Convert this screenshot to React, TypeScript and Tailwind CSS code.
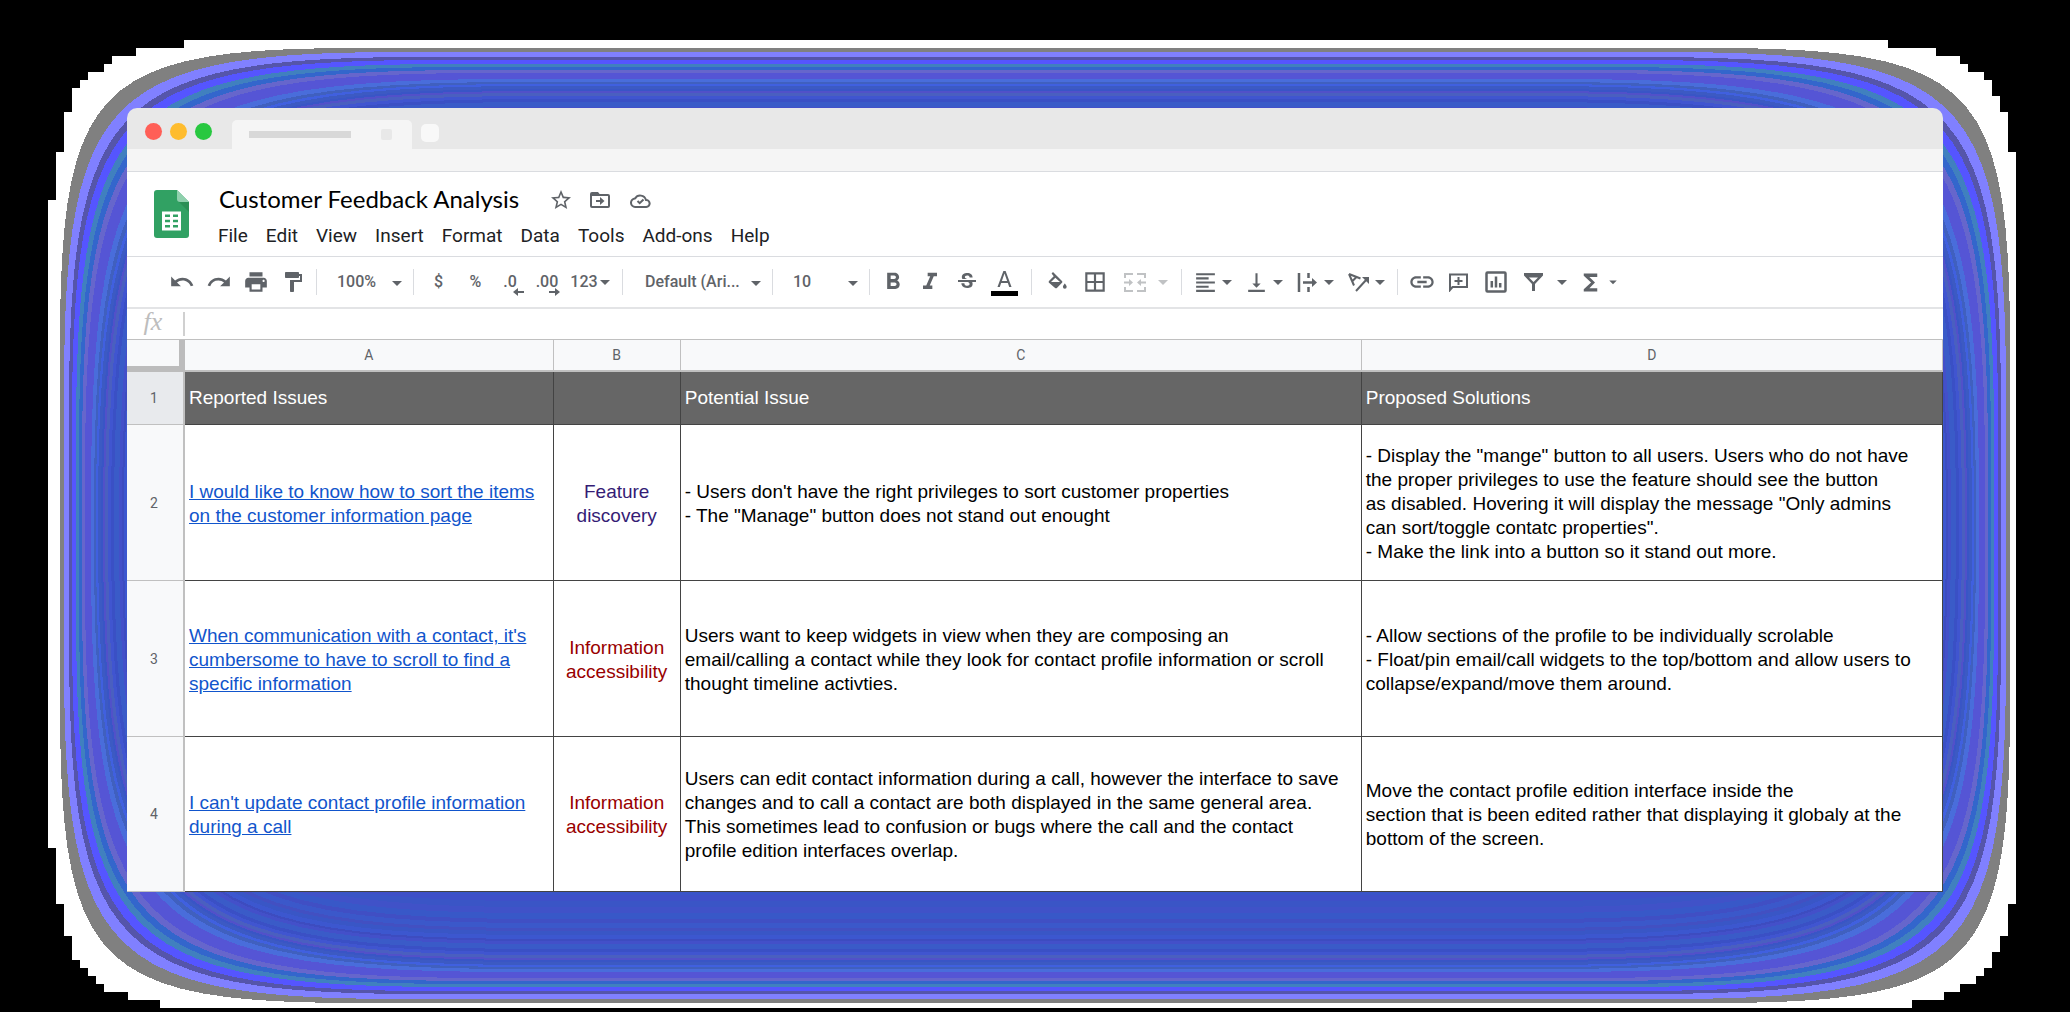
import type { ReactNode } from "react";
import {
  MdUndo,
  MdRedo,
  MdPrint,
  MdFormatPaint,
  MdFormatBold,
  MdFormatItalic,
  MdStrikethroughS,
  MdBorderAll,
  MdFormatAlignLeft,
  MdVerticalAlignBottom,
  MdInsertLink,
  MdFunctions,
  MdStarBorder,
} from "react-icons/md";

const BANDS: [number, string][] = [
  [0, "#808080"],
  [4, "#8080ff"],
  [9, "#5555aa"],
  [12, "#5555ff"],
  [16, "#4080bf"],
  [19, "#3366cc"],
  [22, "#6666cc"],
  [25, "#5555d5"],
  [31, "#496ddb"],
  [34, "#4060bf"],
  [36, "#4060df"],
  [38, "#3c5ac3"],
  [41, "#3955c6"],
  [43, "#5151c9"],
  [45, "#4a5fc0"],
  [48, "#4055d0"],
  [51, "#3a50c5"],
  [54, "#3a5bc8"],
  [59, "#4350c9"],
  [62, "#3d4cc0"],
  [64, "#3c57cf"],
  [68, "#3956c6"],
  [72, "#4250c2"],
  [75, "#3b58ca"],
  [80, "#404fc4"],
  [84, "#3858c8"],
  [90, "#4052c8"],
  [96, "#3a55c6"],
  [102, "#3e50c8"],
  [108, "#3954c8"],
];

function bandPath(d: number) {
  const l = 60 + d;
  const t = 48 + d;
  const r = 2010 - d;
  const b = 1003 - d;
  const c = Math.min(d === 0 ? 300 : 330 + d * 3, (b - t) / 2);
  const k = c * 0.12;
  return `M${l} ${t + c}C${l} ${t + k} ${l + k} ${t} ${l + c} ${t}H${r - c}C${r - k} ${t} ${r} ${t + k} ${r} ${t + c}V${b - c}C${r} ${b - k} ${r - k} ${b} ${r - c} ${b}H${l + c}C${l + k} ${b} ${l} ${b - k} ${l} ${b - c}Z`;
}

function Glow() {
  return (
    <svg
      className="absolute inset-0 h-full w-full"
      viewBox="0 0 2070 1012"
      preserveAspectRatio="none"
      shapeRendering="crispEdges"
      aria-hidden="true"
    >
      <path
        fill="#fff"
        d="M184 40H1888V48H1936V56H1960V64H1968V72H1984V80H1992V96H2000V112H2008V152H2016V904H2008V936H2000V952H1992V968H1984V976H1976V984H1960V992H1944V1000H1912V1008H160V1000H128V992H104V984H96V976H88V968H80V960H72V936H64V904H56V848H48V200H56V152H64V112H72V88H80V80H88V72H104V64H112V56H136V48H184Z"
      />
      {BANDS.map(([d, color]) => (
        <path key={d} d={bandPath(d)} fill={color} />
      ))}
    </svg>
  );
}

function Caret({ className = "" }: { className?: string }) {
  return (
    <svg className={`h-[14px] w-[14px] shrink-0 ${className}`} viewBox="0 0 14 14" fill="currentColor" aria-hidden="true">
      <path d="M2 5h10L7 10z" />
    </svg>
  );
}

function Tool({ label, children, className = "w-[37px]" }: { label: string; children: ReactNode; className?: string }) {
  return (
    <button
      type="button"
      aria-label={label}
      className={`flex h-9 shrink-0 items-center justify-center ${className}`}
    >
      {children}
    </button>
  );
}

function MenuTool({ label, children }: { label: string; children: ReactNode }) {
  return (
    <Tool label={label} className="w-[51px] gap-[2px]">
      {children}
      <Caret />
    </Tool>
  );
}

function Divider({ className = "" }: { className?: string }) {
  return <div className={`h-[26px] w-px shrink-0 bg-[#dadce0] ${className}`} />;
}

function Picker({ label, value, options, className, pad }: { label: string; value: string; options: string[]; className: string; pad: string }) {
  return (
    <div className={`relative shrink-0 ${className}`}>
      <select
        aria-label={label}
        defaultValue={value}
        className={`h-9 w-full appearance-none bg-transparent font-medium ${pad}`}
      >
        {options.map((o) => (
          <option key={o}>{o}</option>
        ))}
      </select>
      <Caret className="pointer-events-none absolute right-[9px] top-[12px]" />
    </div>
  );
}

function Decimal({ text, right }: { text: string; right?: boolean }) {
  return (
    <span className="relative -ml-[5px]">
      {text}
      <svg className={`absolute top-[18px] h-[8px] w-[11px] ${right ? "-right-[2px]" : "-right-[7px]"}`} viewBox="0 0 11 8" fill="currentColor" aria-hidden="true">
        {right ? <path d="M0 3h6V0l5 4-5 4V5H0z" /> : <path d="M11 3H5V0L0 4l5 4V5h6z" />}
      </svg>
    </span>
  );
}

function Toolbar() {
  return (
    <div className="flex h-[52px] items-center overflow-hidden border-b-2 border-[#e3e4e6] pl-9 text-base font-medium text-[#5f6368]" role="toolbar">
      <Tool label="Undo"><MdUndo size={26} /></Tool>
      <Tool label="Redo"><MdRedo size={26} /></Tool>
      <Tool label="Print"><MdPrint size={26} /></Tool>
      <Tool label="Paint format"><MdFormatPaint size={24} /></Tool>
      <Divider className="ml-[5px]" />
      <Picker label="Zoom" value="100%" options={["50%", "100%", "150%"]} className="w-[96px]" pad="pl-5" />
      <Divider />
      <Tool label="Format as currency" className="ml-[6px] w-[37px]">$</Tool>
      <Tool label="Format as percent">%</Tool>
      <Tool label="Decrease decimal places"><Decimal text=".0" /></Tool>
      <Tool label="Increase decimal places"><Decimal text=".00" right /></Tool>
      <Tool label="More formats" className="w-[46px]">
        123
        <Caret />
      </Tool>
      <Divider className="ml-[8px]" />
      <Picker label="Font" value="Default (Ari..." options={["Default (Ari...", "Roboto", "Verdana"]} className="w-[149px]" pad="pl-[22px]" />
      <Divider />
      <Picker label="Font size" value="10" options={["8", "10", "12"]} className="w-[96px]" pad="pl-5" />
      <Divider className="mr-[4px]" />
      <Tool label="Bold"><MdFormatBold size={28} /></Tool>
      <Tool label="Italic"><MdFormatItalic size={28} /></Tool>
      <Tool label="Strikethrough"><MdStrikethroughS size={24} /></Tool>
      <Tool label="Text color" className="ml-px w-[37px]">
        <span className="flex flex-col items-center gap-[4px] pt-[2px]">
          <svg className="h-[16px] w-[15px]" viewBox="0 0 16 17" fill="currentColor" aria-hidden="true">
            <path d="M6.800 0h2.400L15.500 17h-2.500l-1.400-4.200H4.400L3 17H.5zM8 2.700 5.200 10.700h5.600z" />
          </svg>
          <span className="h-[5px] w-[27px] bg-black" />
        </span>
      </Tool>
      <Divider className="ml-[8px] mr-[6px]" />
      <Tool label="Fill color">
        <svg className="h-[20px] w-[20px]" viewBox="0 0 20 20" fill="currentColor" aria-hidden="true">
          <path
            fillRule="evenodd"
            d="M4.600 1.400 6 0l9 9a1.300 1.300 0 0 1 0 1.800l-5.100 5.100a1.300 1.300 0 0 1-1.800 0L2 10.800A1.300 1.300 0 0 1 2 9l4.700-4.700zM8.300 5.700 4 10h9z"
          />
          <path d="M17.800 11.500s1.900 2.100 1.900 3.300a1.900 1.900 0 0 1-3.800 0c0-1.200 1.900-3.300 1.900-3.300z" />
        </svg>
      </Tool>
      <Tool label="Borders" className="ml-px w-[37px]"><MdBorderAll size={26} /></Tool>
      <Tool label="Merge cells" className="ml-[3px] w-[37px] text-[#c0c2c4]">
        <svg className="h-[19px] w-[22px]" viewBox="0 0 22 19" fill="none" stroke="currentColor" strokeWidth="2" aria-hidden="true">
          <path d="M1 5V1h8M13 1h8v4M1 14v4h8M13 18h8v-4M0 9.500h6M22 9.500h-6" />
          <path d="M5 6l4 3.500L5 13zM17 6l-4 3.500 4 3.500z" fill="currentColor" stroke="none" />
        </svg>
      </Tool>
      <Tool label="Merge type" className="w-5 text-[#c0c2c4]"><Caret /></Tool>
      <Divider className="ml-[8px] mr-[6px]" />
      <MenuTool label="Horizontal align"><MdFormatAlignLeft size={25} /></MenuTool>
      <MenuTool label="Vertical align"><MdVerticalAlignBottom size={25} /></MenuTool>
      <MenuTool label="Text wrapping">
        <svg className="h-[25px] w-[25px]" viewBox="0 0 25 25" fill="none" stroke="currentColor" strokeWidth="2.500" aria-hidden="true">
          <path d="M4 3v19M13.500 3v5M13.500 17v5M8 12.500h11" />
          <path d="M17 8l5 4.500-5 4.500z" fill="currentColor" stroke="none" />
        </svg>
      </MenuTool>
      <MenuTool label="Text rotation">
        <svg className="h-[25px] w-[25px]" viewBox="0 0 25 25" fill="none" stroke="currentColor" strokeWidth="2" aria-hidden="true">
          <path d="M3 4l11.500 4.500M3 4l5 11.500M6 11.500l5-5M10 21l11-12" />
          <path d="M16 7h7v7z" fill="currentColor" stroke="none" />
        </svg>
      </MenuTool>
      <Divider className="mx-[5px]" />
      <Tool label="Insert link"><MdInsertLink size={28} /></Tool>
      <Tool label="Insert comment">
        <svg className="h-[19px] w-[19px]" viewBox="0 0 19 19" fill="none" stroke="currentColor" strokeWidth="2" aria-hidden="true">
          <path d="M1 17V1.500h17v12.500H3.500zM9.500 4v8M5.500 8h8" />
        </svg>
      </Tool>
      <Tool label="Insert chart">
        <svg className="h-[22px] w-[22px]" viewBox="0 0 22 22" fill="none" stroke="currentColor" strokeWidth="2.500" aria-hidden="true">
          <rect x="1.500" y="1.500" width="19" height="19" rx="1" />
          <path d="M6.800 10v6.500M11 5.500v11M15.200 12v4.500" />
        </svg>
      </Tool>
      <Tool label="Create a filter" className="ml-px w-[37px]">
        <svg className="h-[18px] w-[19px]" viewBox="0 0 19 18" fill="currentColor" aria-hidden="true">
          <path fillRule="evenodd" d="M0 0h19v2.500L11 11v7H8v-7L0 2.500zM5 4.500l4.500 4.500L14 4.500z" />
        </svg>
      </Tool>
      <Tool label="Filter views" className="w-5"><Caret /></Tool>
      <Tool label="Functions"><MdFunctions size={27} /></Tool>
      <Tool label="More functions" className="-ml-1 w-4"><Caret className="scale-75" /></Tool>
    </div>
  );
}

function TitleBar() {
  return (
    <div className="flex h-[41px] items-end overflow-hidden rounded-t-[10px] bg-[#e8e8e8] pl-[18px]">
      <div className="flex gap-[8px] pb-[9px]">
        <span className="h-[17px] w-[17px] rounded-full bg-[#ff5f57]" />
        <span className="h-[17px] w-[17px] rounded-full bg-[#febc2e]" />
        <span className="h-[17px] w-[17px] rounded-full bg-[#28c840]" />
      </div>
      <div className="ml-[20px] flex h-[29px] w-[180px] items-center justify-between rounded-t-[5px] bg-[#f5f5f5] pl-[17px] pr-[20px]">
        <span className="h-[7px] w-[102px] bg-[#d8d8d8]" />
        <span className="h-[11px] w-[11px] rounded-[2px] bg-[#e8e8e8]" />
      </div>
      <span className="mb-[7px] ml-[9px] h-[18px] w-[18px] rounded-[5px] bg-[#f8f8f8]" />
    </div>
  );
}

function SheetsLogo() {
  return (
    <svg className="h-[48px] w-[35px] shrink-0" viewBox="0 0 35 48" aria-hidden="true">
      <path fill="#31a163" d="M3 0h20l12 12v33a3 3 0 0 1-3 3H3a3 3 0 0 1-3-3V3a3 3 0 0 1 3-3z" />
      <path fill="#2a8f55" d="M24 11l11 11V12z" />
      <path fill="#8fd0ad" d="M23 0l12 12H26a3 3 0 0 1-3-3z" />
      <path
        fill="#fff"
        fillRule="evenodd"
        d="M8 21.500h19v19H8zM11 24.500v2.500h5v-2.500zM19 24.500v2.500h5v-2.500zM11 29.700v2.600h5v-2.600zM19 29.700v2.600h5v-2.600zM11 35v2.500h5V35zM19 35v2.500h5V35z"
      />
    </svg>
  );
}

const MENUS = ["File", "Edit", "View", "Insert", "Format", "Data", "Tools", "Add-ons", "Help"];

function Header() {
  return (
    <header className="flex h-[85px] border-b border-[#dadce0] pl-[27px] pt-[18px]">
      <SheetsLogo />
      <div className="-mt-[6px] ml-[29px]">
        <div className="flex h-[32px] items-center text-[#5f6368]">
          <h1 className="pb-[2px] pl-px font-['Lato','Open_Sans',sans-serif] text-[24px] leading-[30px] text-black">Customer Feedback Analysis</h1>
          <button type="button" aria-label="Star" className="ml-[30px]"><MdStarBorder size={24} /></button>
          <button type="button" aria-label="Move" className="ml-[17px]">
            <svg className="h-[16px] w-[20px]" viewBox="0 0 20 16" fill="none" stroke="currentColor" strokeWidth="2" aria-hidden="true">
              <path d="M1 3v11a1 1 0 0 0 1 1h16a1 1 0 0 0 1-1V4a1 1 0 0 0-1-1zM6 9h5" />
              <path d="M2 0h6l2 2.500v1H0V2a2 2 0 0 1 2-2zM10 5l4.500 4L10 13z" fill="currentColor" stroke="none" />
            </svg>
          </button>
          <button type="button" aria-label="Document status" className="ml-[20px]">
            <svg className="h-[15px] w-[21px]" viewBox="0 0 21 15" fill="none" stroke="currentColor" strokeWidth="2" aria-hidden="true">
              <path d="M5.500 14a4.300 4.300 0 0 1-.4-8.600A6 6 0 0 1 16 7a3.500 3.500 0 0 1 .3 7zM7.500 8l2.200 2.200L13.500 6.500" />
            </svg>
          </button>
        </div>
        <nav className="mt-[8px] flex gap-[18px] text-[19px] leading-6 text-[#202124]">
          {MENUS.map((m) => (
            <button type="button" key={m}>{m}</button>
          ))}
        </nav>
      </div>
    </header>
  );
}

type Row = { issue: string; tag: string; tone: string; cause: string; fix: string };

const ROWS: Row[] = [
  {
    issue: "I would like to know how to sort the items\non the customer information page",
    tag: "Feature discovery",
    tone: "text-[#351c75]",
    cause: "- Users don't have the right privileges to sort customer properties\n- The \"Manage\" button does not stand out enought",
    fix: "- Display the \"mange\" button to all users. Users who do not have\nthe proper privileges to use the feature should see the button\nas disabled. Hovering it will display the message \"Only admins\ncan sort/toggle contatc properties\".\n- Make the link into a button so it stand out more.",
  },
  {
    issue: "When communication with a contact, it's\ncumbersome to have to scroll to find a\nspecific information",
    tag: "Information accessibility",
    tone: "text-[#990000]",
    cause: "Users want to keep widgets in view when they are composing an\nemail/calling a contact while they look for contact profile information or scroll\nthought timeline activties.",
    fix: "- Allow sections of the profile to be individually scrolable\n- Float/pin email/call widgets to the top/bottom and allow users to\ncollapse/expand/move them around.",
  },
  {
    issue: "I can't update contact profile information\nduring a call",
    tag: "Information accessibility",
    tone: "text-[#990000]",
    cause: "Users can edit contact information during a call, however the interface to save\nchanges and to call a contact are both displayed in the same general area.\nThis sometimes lead to confusion or bugs where the call and the contact\nprofile edition interfaces overlap.",
    fix: "Move the contact profile edition interface inside the\nsection that is been edited rather that displaying it globaly at the\nbottom of the screen.",
  },
];

const ROW_HEAD = "border-b border-r-2 border-[#c0c0c0] p-0 pr-[2px] text-center align-middle font-['Roboto',sans-serif] text-sm font-normal text-[#5f6368]";
const COL_HEAD = "border-b-2 border-r border-[#c0c0c0] bg-[#f8f9fa] p-0 text-center align-middle font-['Roboto',sans-serif] text-sm font-normal text-[#5f6368]";
const CELL = "whitespace-pre-line border-b border-r border-[#434343] p-0 pl-[4px] pt-[2px] text-left align-middle";
const TITLE_CELL = "border-b border-r border-[#434343] bg-[#666666] p-0 pl-[4px] text-left align-middle font-normal text-white";

function Sheet() {
  return (
    <table className="w-full table-fixed border-separate border-spacing-0 border-t border-[#c0c0c0] font-['Liberation_Sans',Arial,sans-serif] text-[19px] leading-6 text-black">
      <colgroup>
        <col className="w-[58px]" />
        <col className="w-[20.3%]" />
        <col className="w-[7%]" />
        <col className="w-[37.500%]" />
        <col />
      </colgroup>
      <thead>
        <tr className="h-[32px]">
          <th className="border-b-6 border-r-6 border-[#bcbcbc] bg-[#f8f9fa] p-0" aria-label="Select all" />
          {["A", "B", "C", "D"].map((c) => (
            <th key={c} scope="col" className={COL_HEAD}>{c}</th>
          ))}
        </tr>
      </thead>
      <tbody>
        <tr className="h-[53px]">
          <th scope="row" className={`${ROW_HEAD} bg-[#e8eaed]`}>1</th>
          <td className={TITLE_CELL}>Reported Issues</td>
          <td className={TITLE_CELL} />
          <td className={TITLE_CELL}>Potential Issue</td>
          <td className={TITLE_CELL}>Proposed Solutions</td>
        </tr>
        {ROWS.map((r, i) => (
          <tr key={i} className={i === 2 ? "h-[155px]" : "h-[156px]"}>
            <th scope="row" className={`${ROW_HEAD} bg-[#f8f9fa]`}>{i + 2}</th>
            <td className={CELL}>
              <a href="#" className="text-[#1155cc] underline">{r.issue}</a>
            </td>
            <td className="border-b border-r border-[#434343] px-[10px] pb-0 pt-[2px] text-center align-middle">
              <span className={r.tone}>{r.tag}</span>
            </td>
            <td className={CELL}>{r.cause}</td>
            <td className={CELL}>{r.fix}</td>
          </tr>
        ))}
      </tbody>
    </table>
  );
}

export default function App() {
  return (
    <div className="relative min-h-screen bg-black px-[127px] pb-[120px] pt-[108px] font-['Roboto',sans-serif]">
      <Glow />
      <main className="relative">
        <TitleBar />
        <div className="h-[23px] border-b border-[#dadce0] bg-[#f5f5f5]" />
        <div className="bg-white">
          <Header />
          <Toolbar />
          <div className="flex h-[30px] items-center">
            <label htmlFor="formula" className="flex h-6 w-[58px] items-center justify-center border-r-2 border-[#d0d0d0] pb-1 pr-1 font-['Liberation_Serif',serif] text-[26px] italic leading-5 text-[#bdbdbd]">
              fx
            </label>
            <input id="formula" type="text" className="h-6 flex-1 px-2 text-base outline-none" />
          </div>
          <Sheet />
        </div>
      </main>
    </div>
  );
}
